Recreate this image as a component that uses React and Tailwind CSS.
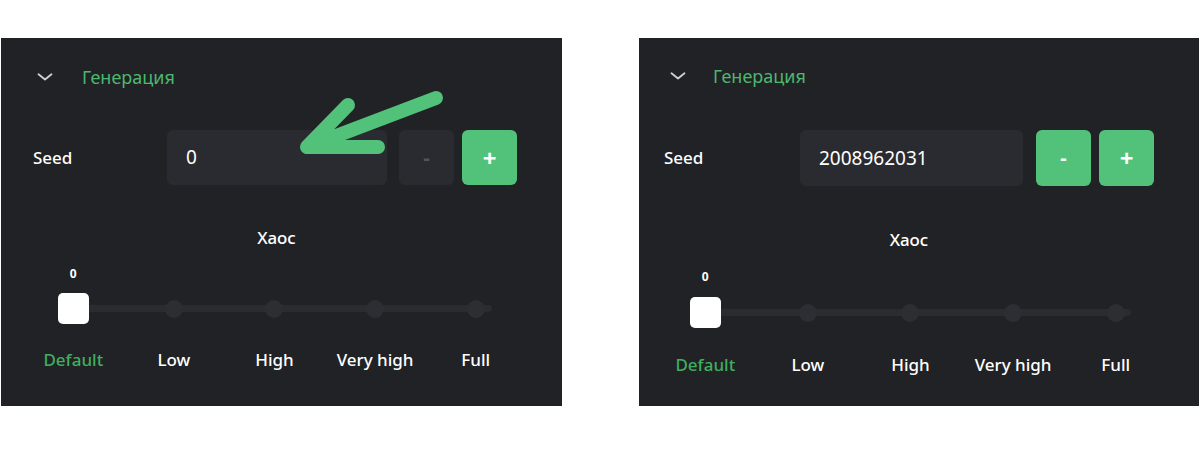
const FONT = { fontFamily: '"Noto Sans", "Open Sans", sans-serif' }

const levels = ['Default', 'Low', 'High', 'Very high', 'Full']

const variants = {
  left: {
    panel: 'w-[561px]',
    head: 'h-[78px] pl-[36px]',
    headGap: 'w-[29px]',
    seedRow: 'mt-[14px] h-[55px] pl-[32px]',
    seedLabel: 'w-[134px]',
    input: 'w-[220px]',
    minus: 'ml-[12px] bg-[#2a2b30] text-[#55565b]',
    chaos: 'mt-[41px] pr-[10px]',
    slider: 'ml-[22px] w-[503px]',
    value: 'mt-[16px]',
    thumbRow: 'mt-[11px]',
    labels: 'mt-[24px]',
    track: 'right-[34px]',
  },
  right: {
    panel: 'w-[560px]',
    head: 'h-[76px] pl-[31px]',
    headGap: 'w-[27px]',
    seedRow: 'mt-[16px] h-[56px] pl-[25px]',
    seedLabel: 'w-[136px]',
    input: 'w-[223px]',
    minus: 'ml-[13px] bg-[#52c27a] text-white',
    chaos: 'mt-[42px] pr-[20px]',
    slider: 'ml-[15px] w-[513px]',
    value: 'mt-[17px]',
    thumbRow: 'mt-[12px]',
    labels: 'mt-[25px]',
    track: 'right-[36px]',
  },
}

const Chevron = () => (
  <svg width="16" height="8" viewBox="0 0 16 8" fill="none">
    <path d="M1.5 1.2 L8 6.5 L14.5 1.2" stroke="#cfd0d2" strokeWidth="1.8" strokeLinecap="round" strokeLinejoin="round" />
  </svg>
)

const Arrow = () => (
  <svg className="absolute inset-0 z-10 pointer-events-none" width="561" height="368" viewBox="0 0 561 368" fill="none">
    <path
      d="M435 60 L306 109 M347 67 L306 109 L377 109"
      stroke="#52c27a"
      strokeWidth="14"
      strokeLinecap="round"
      strokeLinejoin="round"
    />
  </svg>
)

const Panel = ({ side, seed, arrow }) => {
  const v = variants[side]
  return (
    <div className={`relative h-[368px] bg-[#212226] ${v.panel}`} style={FONT}>
      {arrow && <Arrow />}

      <div className={`flex items-center ${v.head}`}>
        <Chevron />
        <div className={v.headGap} />
        <span className="text-[18px] text-[#4cb86e]">Генерация</span>
      </div>

      <div className={`flex items-stretch ${v.seedRow}`}>
        <div className={`flex items-center text-[17px] font-medium text-white ${v.seedLabel}`}>Seed</div>
        <div className={`flex items-center rounded-[6px] bg-[#2a2b30] pl-[19px] text-[19px] text-white ${v.input}`}>
          {seed}
        </div>
        <button className={`w-[55px] rounded-[6px] text-[20px] font-bold ${v.minus}`}>-</button>
        <button className="ml-[8px] w-[55px] rounded-[6px] bg-[#52c27a] text-[24px] font-bold text-white">+</button>
      </div>

      <div className={`text-center text-[17px] font-medium leading-[24px] text-white ${v.chaos}`}>Хаос</div>

      <div className={v.slider}>
        <div className={`grid grid-cols-5 ${v.value}`}>
          <span className="text-center text-[12px] font-bold leading-[16px] text-white">0</span>
        </div>

        <div className={`relative grid h-[31px] grid-cols-5 items-center ${v.thumbRow}`}>
          <div className={`absolute left-[50px] top-[12px] h-[7px] rounded-full bg-[#2b2c30] ${v.track}`} />
          {levels.map((l, i) => (
            <div key={l} className="relative flex justify-center">
              {i === 0 ? (
                <div className="h-[31px] w-[31px] rounded-[5px] bg-white" />
              ) : (
                <div className="h-[18px] w-[18px] rounded-full bg-[#2d2e33]" />
              )}
            </div>
          ))}
        </div>

        <div className={`grid grid-cols-5 ${v.labels}`}>
          {levels.map((l, i) => (
            <span
              key={l}
              className={`text-center text-[17px] font-medium leading-[24px] ${i === 0 ? 'text-[#3fae5f]' : 'text-white'}`}
            >
              {l}
            </span>
          ))}
        </div>
      </div>
    </div>
  )
}

export default function App() {
  return (
    <div className="flex h-[450px] w-[1200px] gap-[77px] bg-white pl-[1px] pt-[38px]">
      <Panel side="left" seed="0" arrow />
      <Panel side="right" seed="2008962031" />
    </div>
  )
}
